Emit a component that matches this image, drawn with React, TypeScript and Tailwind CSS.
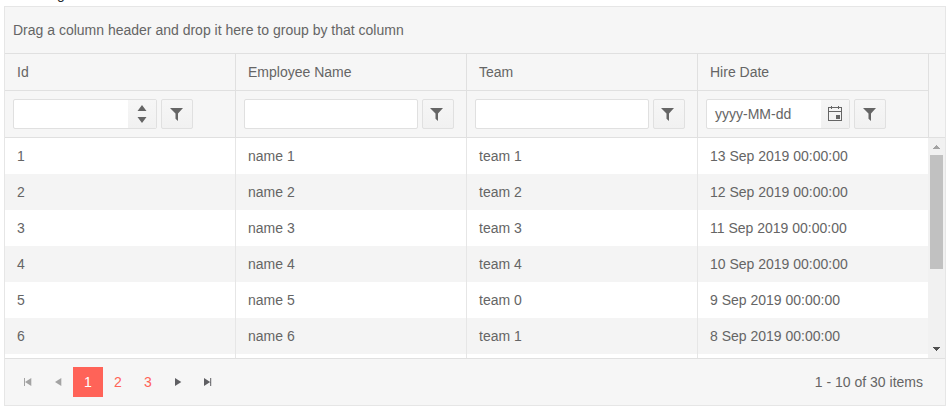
import type { ReactNode } from "react";

const rows = [
  [1, "name 1", "team 1", "13 Sep 2019 00:00:00"],
  [2, "name 2", "team 2", "12 Sep 2019 00:00:00"],
  [3, "name 3", "team 3", "11 Sep 2019 00:00:00"],
  [4, "name 4", "team 4", "10 Sep 2019 00:00:00"],
  [5, "name 5", "team 0", "9 Sep 2019 00:00:00"],
  [6, "name 6", "team 1", "8 Sep 2019 00:00:00"],
  ["", "", "", ""],
];

function FilterButton({ iconClass = "mr-1" }: { iconClass?: string }) {
  return (
    <button className="flex h-[30px] w-8 shrink-0 items-center justify-center rounded-[2px] border border-[#e0e0e0] bg-linear-to-b from-[#f6f6f6] to-[#f1f1f1]">
      <svg width="13" height="14" viewBox="0 0 13 14" fill="#656565" className={iconClass}>
        <path d="M0 1h13L8 6.500V14L5.500 11.800V6.500z" />
      </svg>
    </button>
  );
}

function TextFilter() {
  return (
    <>
      <div className="h-[30px] w-[174px] rounded-[2px] border border-[#e0e0e0] bg-white" />
      <FilterButton iconClass="mr-[3px]" />
    </>
  );
}

function AddonField({ text, children }: { text?: string; children: ReactNode }) {
  return (
    <>
      <div className="flex h-[30px] w-36 overflow-hidden rounded-[2px] border border-[#e0e0e0] bg-white">
        <div className="w-[114px] pl-2 leading-[28px]">{text}</div>
        <div className="flex flex-1 items-center justify-center bg-linear-to-b from-[#f6f6f6] to-[#f1f1f1]">
          {children}
        </div>
      </div>
      <FilterButton iconClass="mr-px" />
    </>
  );
}

function FilterCell({ children }: { children: ReactNode }) {
  return (
    <div className="flex h-[46px] w-[231px] items-center gap-1 border-r border-[#e0e0e0] pl-2">
      {children}
    </div>
  );
}

function PagerIcon({ d, muted }: { d: string; muted?: boolean }) {
  return (
    <button className="flex size-[30px] items-center justify-center">
      <svg width="16" height="16" viewBox="0 0 16 16" className={muted ? "fill-[#a3a3a3]" : "fill-[#5f5f63]"}>
        <path d={d} />
      </svg>
    </button>
  );
}

export default function App() {
  return (
    <div className="h-[409px] w-[951px] overflow-hidden bg-white font-['Liberation_Sans',Arial,sans-serif] text-[14px] leading-5 text-[#656565]">
      <div className="flex h-1.5 items-end overflow-hidden pl-[57px] text-[#212529]">
        <span className="mb-[2px]">g</span>
      </div>
      <div className="ml-1 flex h-[400px] w-[942px] flex-col border border-[#e6e6e6] bg-[#f6f6f6]">
        <div className="flex h-[47px] shrink-0 items-center border-b border-[#e0e0e0] pl-2">
          Drag a column header and drop it here to group by that column
        </div>

        <div className="flex h-[84px] shrink-0 border-b border-[#e0e0e0]">
          <div className="w-[924px]">
            <div className="flex h-[37px] border-b border-[#e0e0e0]">
              {["Id", "Employee Name", "Team", "Hire Date"].map((title) => (
                <div key={title} className="flex w-[231px] items-center border-r border-[#e0e0e0] pl-3">
                  {title}
                </div>
              ))}
            </div>
            <div className="flex">
              <FilterCell>
                <AddonField>
                  <svg width="10" height="20" viewBox="0 0 10 20" fill="#656565">
                    <path d="M.5 7h9L5 1zM.5 13h9L5 19z" />
                  </svg>
                </AddonField>
              </FilterCell>
              <FilterCell>
                <TextFilter />
              </FilterCell>
              <FilterCell>
                <TextFilter />
              </FilterCell>
              <FilterCell>
                <AddonField text="yyyy-MM-dd">
                  <svg width="16" height="16" viewBox="0 0 16 16" fill="#656565" shapeRendering="crispEdges">
                    <path d="M1 1h3V0h1v1h6V0h1v1h3v14H1zM2 2v3h12V2h-2v1h-1V2H5v1H4V2zM2 6v8h12V6zM9 9h4v4H9z" fillRule="evenodd" />
                  </svg>
                </AddonField>
              </FilterCell>
            </div>
          </div>
        </div>

        <div className="flex h-[220px] shrink-0 overflow-hidden bg-white">
          <div className="w-[923px]">
            {rows.map((row, i) => (
              <div key={i} className="flex h-9 odd:bg-white even:bg-[#f4f4f4]">
                {row.map((cell, j) => (
                  <div key={j} className="flex w-[231px] shrink-0 items-center border-r border-[#e6e6e6] pl-3 last:w-[230px] last:border-r-0">
                    {cell}
                  </div>
                ))}
              </div>
            ))}
          </div>
          <div className="flex w-[17px] flex-col items-center bg-[#f1f1f1]">
            <svg width="17" height="17" viewBox="0 0 17 17" fill="#a3a3a3" shapeRendering="crispEdges">
              <path d="M8 7h1v1h1v1h1v1h1v1H5v-1h1V9h1V8h1z" />
            </svg>
            <div className="h-[114px] w-[13px] bg-[#c1c1c1]" />
            <svg width="17" height="17" viewBox="0 0 17 17" fill="#505050" shapeRendering="crispEdges" className="mt-auto">
              <path d="M5 6h7v1h-1v1h-1v1H9v1H8V9H7V8H6V7H5z" />
            </svg>
          </div>
        </div>

        <div className="flex flex-1 items-center justify-between border-t border-[#e0e0e0] pr-[22px] pl-2">
          <div className="flex">
            <PagerIcon muted d="M4 4h1v8H4zM11.300 4v8L5 8z" />
            <PagerIcon muted d="M11.300 4v8L5 8z" />
            <button className="size-[30px] bg-[#ff6358] text-white">1</button>
            <button className="size-[30px] text-[#ff6358]">2</button>
            <button className="size-[30px] text-[#ff6358]">3</button>
            <PagerIcon d="M5 4v8l6.300-4z" />
            <PagerIcon d="M10.200 4h1v8h-1zM4 4v8l6.200-4z" />
          </div>
          <span>1 - 10 of 30 items</span>
        </div>
      </div>
    </div>
  );
}
